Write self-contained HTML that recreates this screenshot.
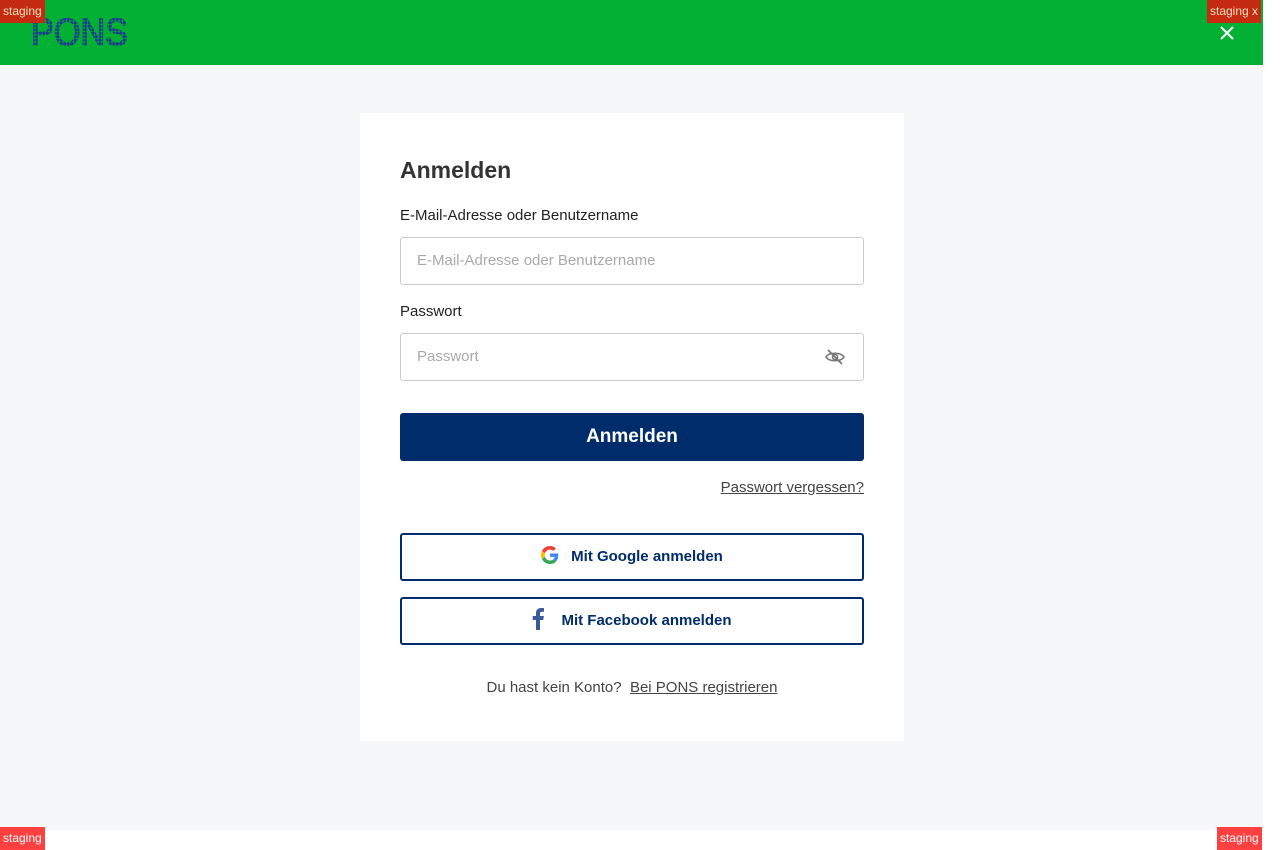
<!DOCTYPE html>
<html><head><meta charset="utf-8"><style>
*{box-sizing:border-box;margin:0;padding:0}
body{width:1280px;height:850px;background:#fff;font-family:"Liberation Sans",sans-serif;position:relative;overflow:hidden}
#main{position:absolute;left:0;top:0;width:1263px;height:830px;background:#f6f7f9}
#hdr{position:absolute;left:0;top:0;width:1263px;height:65px;background:#02b033}
.stag{position:absolute;background:#c42b10;color:#f0e0c0;font-size:12px;line-height:23px;height:23px;padding:0 3px}
.stag2{position:absolute;background:#ff4040;color:#fff;font-size:12px;line-height:23px;height:23px;padding:0 3px}
#card{position:absolute;left:360px;top:113px;width:544px;height:628px;background:#fff}
h1{position:absolute;left:40px;top:44px;font-size:23px;color:#333;font-weight:bold}
.lbl{position:absolute;left:40px;font-size:15px;color:#222}
.inp{position:absolute;left:40px;width:464px;height:48px;border:1px solid #ccc;border-radius:3px;font-size:15px;color:#aaa;padding-left:16px;line-height:46px}
.btn{position:absolute;left:40px;width:464px;height:48px;background:#002c6b;border-radius:3px;color:#fff;font-weight:bold;font-size:19px;text-align:center;line-height:48px}
.sbtn{position:absolute;left:40px;width:464px;height:48px;border:2px solid #002c6b;border-radius:3px;color:#002c6b;font-weight:bold;font-size:15px;line-height:44px;text-align:center}
.sbtn svg{vertical-align:middle;margin-right:12px;position:relative;top:-2px}
a{color:#444;text-decoration:underline}
</style></head><body>
<div id="main">
<div id="hdr">
<svg width="140" height="60" style="position:absolute;left:0;top:0"><defs><pattern id="d" width="3.5" height="3.5" patternUnits="userSpaceOnUse"><circle cx="1.75" cy="1.75" r="1.6" fill="#1a3f8c"/></pattern></defs><text x="31" y="45" font-family="Liberation Sans" font-size="38" fill="url(#d)" stroke="url(#d)" stroke-width="1.5" textLength="97" lengthAdjust="spacingAndGlyphs">PONS</text></svg>
<svg width="16" height="16" style="position:absolute;left:1219px;top:25px"><path d="M2 2L14 14M14 2L2 14" stroke="#fff" stroke-width="2"/></svg>
</div>
<div class="stag" style="left:0;top:0">staging</div>
<div class="stag" style="left:1207px;top:0">staging x</div>
<div id="card">
<h1>Anmelden</h1>
<div class="lbl" style="top:94px">E-Mail-Adresse oder Benutzername</div>
<div class="inp" style="top:124px">E-Mail-Adresse oder Benutzername</div>
<div class="lbl" style="top:190px">Passwort</div>
<div class="inp" style="top:220px">Passwort
<svg width="20" height="18" viewBox="0 0 20 18" style="position:absolute;right:18px;top:14px"><path d="M1 9C4 4 16 4 19 9C16 14 4 14 1 9Z" fill="none" stroke="#777" stroke-width="1.6"/><circle cx="10" cy="9" r="2.5" fill="none" stroke="#777" stroke-width="1.6"/><path d="M3 2L17 16" stroke="#777" stroke-width="1.8"/></svg></div>
<div class="btn" style="top:300px">Anmelden</div>
<div style="position:absolute;right:40px;top:366px;font-size:15px"><a>Passwort vergessen?</a></div>
<div class="sbtn" style="top:420px"><svg width="18" height="18" viewBox="0 0 48 48"><path fill="#EA4335" d="M24 9.5c3.5 0 6.6 1.2 9.1 3.6l6.8-6.8C35.8 2.4 30.3 0 24 0 14.6 0 6.6 5.4 2.6 13.3l7.9 6.1C12.4 13.7 17.7 9.5 24 9.5z"/><path fill="#4285F4" d="M46.1 24.5c0-1.6-.1-3.1-.4-4.5H24v9h12.4c-.5 2.9-2.2 5.4-4.7 7l7.6 5.9c4.4-4.1 6.8-10.1 6.8-17.4z"/><path fill="#FBBC05" d="M10.5 28.6c-.5-1.4-.8-3-.8-4.6s.3-3.2.8-4.6l-7.9-6.1C.9 16.5 0 20.1 0 24s.9 7.5 2.6 10.7l7.9-6.1z"/><path fill="#34A853" d="M24 48c6.5 0 11.9-2.1 15.9-5.8l-7.6-5.9c-2.1 1.4-4.9 2.3-8.3 2.3-6.3 0-11.6-4.2-13.5-10l-7.9 6.1C6.6 42.6 14.6 48 24 48z"/></svg>Mit Google anmelden</div>
<div class="sbtn" style="top:484px"><svg width="12" height="22" viewBox="0 0 12 22" style="margin-right:17px"><path fill="#3b5998" d="M8 22V12h3.3l.5-4H8V5.6C8 4.5 8.3 3.7 9.9 3.7H12V.2C11.6.1 10.4 0 9 0 6 0 4 1.8 4 5.2V8H.7v4H4v10z"/></svg>Mit Facebook anmelden</div>
<div style="position:absolute;left:0;width:544px;top:566px;text-align:center;font-size:15px;color:#444">Du hast kein Konto?&nbsp; <a>Bei PONS registrieren</a></div>
</div>
</div>
<div class="stag2" style="left:0;top:827px">staging</div>
<div class="stag2" style="left:1217px;top:827px">staging</div>
</body></html>
